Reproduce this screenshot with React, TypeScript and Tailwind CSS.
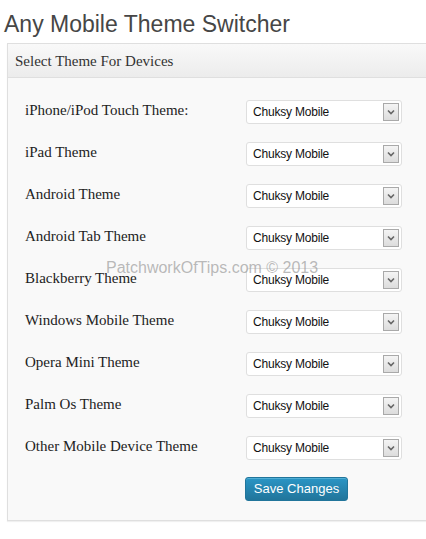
const rows = [
  "iPhone/iPod Touch Theme:",
  "iPad Theme",
  "Android Theme",
  "Android Tab Theme",
  "Blackberry Theme",
  "Windows Mobile Theme",
  "Opera Mini Theme",
  "Palm Os Theme",
  "Other Mobile Device Theme",
];

function ThemeSelect() {
  return (
    <div className="flex h-[24px] w-[156px] shrink-0 items-center justify-between rounded-[3px] border border-[#dfdfdf] bg-white pl-[6px] pr-[2px] font-['Liberation_Sans',Arial,sans-serif] text-[12px] text-[#111]">
      <span className="tracking-[-0.2px]">Chuksy Mobile</span>
      <span className="flex h-[18px] w-[16px] items-center justify-center border border-[#a9a9a9] bg-gradient-to-b from-[#f4f4f4] to-[#dcdcdc]">
        <svg width="8" height="6" viewBox="0 0 8 6">
          <path d="M1 1.5 L4 4.5 L7 1.5" fill="none" stroke="#666" strokeWidth="1.6" />
        </svg>
      </span>
    </div>
  );
}

export default function App() {
  return (
    <div className="relative h-[539px] w-[426px] overflow-hidden bg-white">
      <h1 className="pl-[4px] pt-[10px] font-['Liberation_Sans',Arial,sans-serif] text-[23px] leading-[28px] text-[#464646]">
        Any Mobile Theme Switcher
      </h1>

      <div className="ml-[7px] mt-[5px] w-[440px] border border-[#dfdfdf] bg-[#f9f9f9] shadow-[0_1px_1px_rgba(0,0,0,0.06)]">
        <div className="h-[34px] border-b border-[#dfdfdf] bg-gradient-to-b from-[#f9f9f9] to-[#ececec] pl-[7px] pt-[8px] font-['Liberation_Serif',Georgia,serif] text-[15px] leading-[18px] text-[#333]">
          Select Theme For Devices
        </div>

        <div className="pb-[19px] pt-[22px]">
          {rows.map((label) => (
            <div key={label} className="flex h-[42px] items-start">
              <div className="w-[238px] shrink-0 pl-[17px] font-['Liberation_Serif',Georgia,serif] text-[15px] leading-[20px] text-[#222]">
                {label}
              </div>
              <ThemeSelect />
            </div>
          ))}
          <div className="-mt-[1px] flex pl-[237px]">
            <button className="h-[24px] w-[103px] rounded-[3px] border border-[#21759b] bg-gradient-to-b from-[#2a95c5] to-[#21759b] font-['Liberation_Sans',Arial,sans-serif] text-[13px] text-white shadow-[inset_0_1px_0_rgba(120,200,230,0.5)]">
              Save Changes
            </button>
          </div>
        </div>
      </div>

      <div className="pointer-events-none absolute left-[106px] top-[258px] font-['Liberation_Sans',Arial,sans-serif] text-[16px] leading-[20px] text-[#9c9c9c]/70">
        PatchworkOfTips.com © 2013
      </div>
    </div>
  );
}
